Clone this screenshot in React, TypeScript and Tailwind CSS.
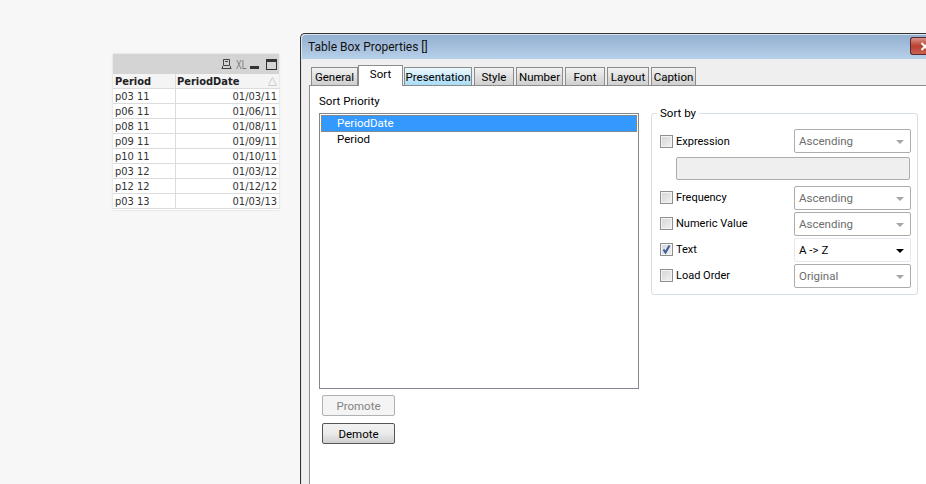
const rows = [
  ['p03 11', '01/03/11'],
  ['p06 11', '01/06/11'],
  ['p08 11', '01/08/11'],
  ['p09 11', '01/09/11'],
  ['p10 11', '01/10/11'],
  ['p03 12', '01/03/12'],
  ['p12 12', '01/12/12'],
  ['p03 13', '01/03/13'],
];

const tabs = [
  { label: 'General', cls: 'w-[47px]' },
  { label: 'Sort', cls: 'w-[45px]', active: true },
  { label: 'Presentation', cls: 'w-[68px]', hover: true },
  { label: 'Style', cls: 'w-[40px]' },
  { label: 'Number', cls: 'w-[47px]' },
  { label: 'Font', cls: 'w-[40px]' },
  { label: 'Layout', cls: 'w-[42px]' },
  { label: 'Caption', cls: 'w-[45px]' },
];

const sortRows = [
  { label: 'Frequency', value: 'Ascending' },
  { label: 'Numeric Value', value: 'Ascending' },
  { label: 'Text', value: 'A -> Z', checked: true },
  { label: 'Load Order', value: 'Original' },
];

function TableBox() {
  return (
    <div className="w-[166px] h-[156px] mt-[54px] shrink-0 bg-white shadow-[0_0_2px_#d0d0d0] font-['DejaVu_Sans',sans-serif] [font-stretch:condensed] text-[11px] text-[#333]">
      <div className="h-[20px] bg-[#d4d4d4] flex items-center pl-[108px]">
        <svg width="11" height="12" viewBox="0 0 11 12" fill="none" stroke="#444">
          <path d="M2.5 1.5h6v6h-6zM4 3.5h3M.5 10.5h10M1.5 8v2.5M9.5 8v2.5" />
        </svg>
        <span className="ml-[4px] w-[11px] text-[13px] leading-none text-[#777] font-['Liberation_Sans',sans-serif] [font-stretch:normal] scale-x-[0.65] origin-left">XL</span>
        <span className="w-[9px] h-[3px] bg-[#333] mt-[7px] ml-[3px]" />
        <span className="w-[11px] h-[11px] border border-[#333] border-t-[3px] ml-[7px]" />
      </div>
      <div className="flex h-[15px] bg-[#f4f4f4] border-b border-[#dcdcdc] font-bold text-[#222] leading-[15px]">
        <div className="w-[63px] pl-[2px] border-r border-[#dcdcdc]">Period</div>
        <div className="flex-1 pl-[1px] relative">
          PeriodDate
          <svg width="9" height="9" viewBox="0 0 9 9" className="absolute right-[2px] top-[3px]">
            <path d="M4.5 .5L8.5 8.5H.5z" fill="#f4f4f4" stroke="#ccc" />
          </svg>
        </div>
      </div>
      {rows.map((r) => (
        <div key={r[0] + r[1]} className="flex h-[15px] border-b border-[#dcdcdc] leading-[15px]">
          <div className="w-[60px] pl-[2px] border-r border-[#dcdcdc] box-content">{r[0]}</div>
          <div className="flex-1 text-right pr-[2px]">{r[1]}</div>
        </div>
      ))}
    </div>
  );
}

function Checkbox({ checked }: { checked?: boolean }) {
  return (
    <span className="w-[13px] h-[13px] shrink-0 border border-[#8e8f8f] bg-gradient-to-br from-[#d4d4d4] to-[#f2f2f2] flex shadow-[inset_0_0_0_1px_#f4f4f4]">
      {checked && (
        <svg width="11" height="11" viewBox="0 0 11 11" fill="none">
          <path d="M2.5 5.5l2 3L8.5 1.5" stroke="#3f5a9e" strokeWidth="2" />
        </svg>
      )}
    </span>
  );
}

function Combo({ value, active }: { value: string; active?: boolean }) {
  return (
    <div
      className={`w-[117px] h-[24px] rounded-[2px] border flex items-center justify-between pl-[4px] pr-[6px] pt-[1px] ${
        active ? 'border-[#e3e9ef] text-black bg-white' : 'border-[#acacac] text-[#6d6d6d] bg-white'
      }`}
    >
      {value}
      <span
        className={`w-0 h-0 border-x-[4px] border-x-transparent border-t-[4px] ${
          active ? 'border-t-black' : 'border-t-[#a6a6a6]'
        }`}
      />
    </div>
  );
}

function SortBy() {
  return (
    <div className="w-[267px] h-[182px] mt-[27px] rounded-[3px] border border-[#d5dfe5] relative pl-[8px] pr-[6px] pt-[15px]">
      <span className="absolute left-[5px] top-[-8px] bg-white px-[3px] leading-[14px]">Sort by</span>
      <div className="flex items-center justify-between h-[24px]">
        <div className="flex items-center gap-[3px]">
          <Checkbox />
          <span className="text-[11px] pt-[2px]">Expression</span>
        </div>
        <Combo value="Ascending" />
      </div>
      <div className="h-[23px] ml-[16px] mt-[4px] mr-[1px] rounded-[2px] bg-[#efefef] border border-[#acacac]" />
      <div className="flex flex-col gap-[2px] mt-[6px]">
        {sortRows.map((r) => (
          <div key={r.label} className="flex items-center justify-between h-[24px]">
            <div className="flex items-center gap-[3px] -mt-[2px]">
              <Checkbox checked={r.checked} />
              <span className="text-[11px] pt-[2px]">{r.label}</span>
            </div>
            <Combo value={r.value} active={r.checked} />
          </div>
        ))}
      </div>
    </div>
  );
}

function Dialog() {
  return (
    <div className="w-[640px] h-[460px] ml-[21px] mt-[33px] shrink-0 rounded-t-[5px] border border-[#333] border-r-0 border-b-0 bg-[#efefef] shadow-[inset_0_0_0_1px_#d9e4ef] font-['Roboto',sans-serif] text-[11.5px] text-black flex flex-col">
      <div className="h-[24px] mx-[1px] mt-[1px] rounded-t-[4px] bg-gradient-to-b from-[#94b0d0] to-[#b7d0ea] flex items-center justify-between pl-[6px] shrink-0">
        <span className="text-[12px] text-[#111]">Table Box Properties []</span>
        <span className="w-[29px] h-[18px] mt-[-2px] rounded-l-[3px] border border-r-0 border-[#5a2a30] bg-gradient-to-b from-[#d99088] via-[#b8402f] to-[#c9604f] flex items-center justify-center">
          <svg width="10" height="9" viewBox="0 0 10 9" fill="none" stroke="#fff" strokeWidth="2">
            <path d="M1.5 1l7 7M8.5 1l-7 7" />
          </svg>
        </span>
      </div>
      <div className="flex items-end h-[27px] pl-[10px] shrink-0 z-10 -mb-px">
        {tabs.map((t, i) => (
          <div
            key={t.label}
            className={`flex justify-center border border-[#8c8c8c] ${t.cls} ${
              t.active
                ? 'h-[21px] bg-white border-b-0 mr-[1px]'
                : t.hover
                  ? 'h-[19px] pt-[1px] mr-[2px] bg-gradient-to-b from-[#ecf8fe] to-[#a8dcf6] border-[#4f8fb5] border-b-[#8c8c8c]'
                  : `h-[19px] pt-[1px] bg-gradient-to-b from-[#f2f2f2] to-[#cfcfcf] ${i === 0 ? '' : 'mr-[2px]'}`
            }`}
          >
            {t.label}
          </div>
        ))}
      </div>
      <div className="flex-1 ml-[8px] bg-white border-l border-t border-[#8c8c8c] pl-[9px] flex gap-[12px]">
        <div className="w-[320px] shrink-0">
          <div className="h-[27px] pt-[8px] leading-[14px]">Sort Priority</div>
          <div className="h-[276px] border border-[#828790] p-[1px]">
            <div className="h-[17px] bg-[#3399ff] text-white pl-[16px] leading-[16px] outline-1 outline-dotted -outline-offset-1 outline-[#c08030]">
              PeriodDate
            </div>
            <div className="h-[16px] pl-[16px] leading-[15px]">Period</div>
          </div>
          <div className="mt-[6px] ml-[3px] w-[73px] h-[21px] rounded-[2px] border border-[#adb2b5] bg-[#f4f4f4] text-[#838383] text-center leading-[20px]">
            Promote
          </div>
          <div className="mt-[7px] ml-[3px] w-[73px] h-[21px] rounded-[2px] border border-[#555] bg-gradient-to-b from-[#f2f2f2] via-[#ebebeb] to-[#cfcfcf] text-center leading-[20px]">
            Demote
          </div>
        </div>
        <SortBy />
      </div>
    </div>
  );
}

export default function App() {
  return (
    <div className="w-[926px] h-[484px] overflow-hidden bg-[#f7f7f7] flex pl-[113px]">
      <TableBox />
      <Dialog />
    </div>
  );
}
